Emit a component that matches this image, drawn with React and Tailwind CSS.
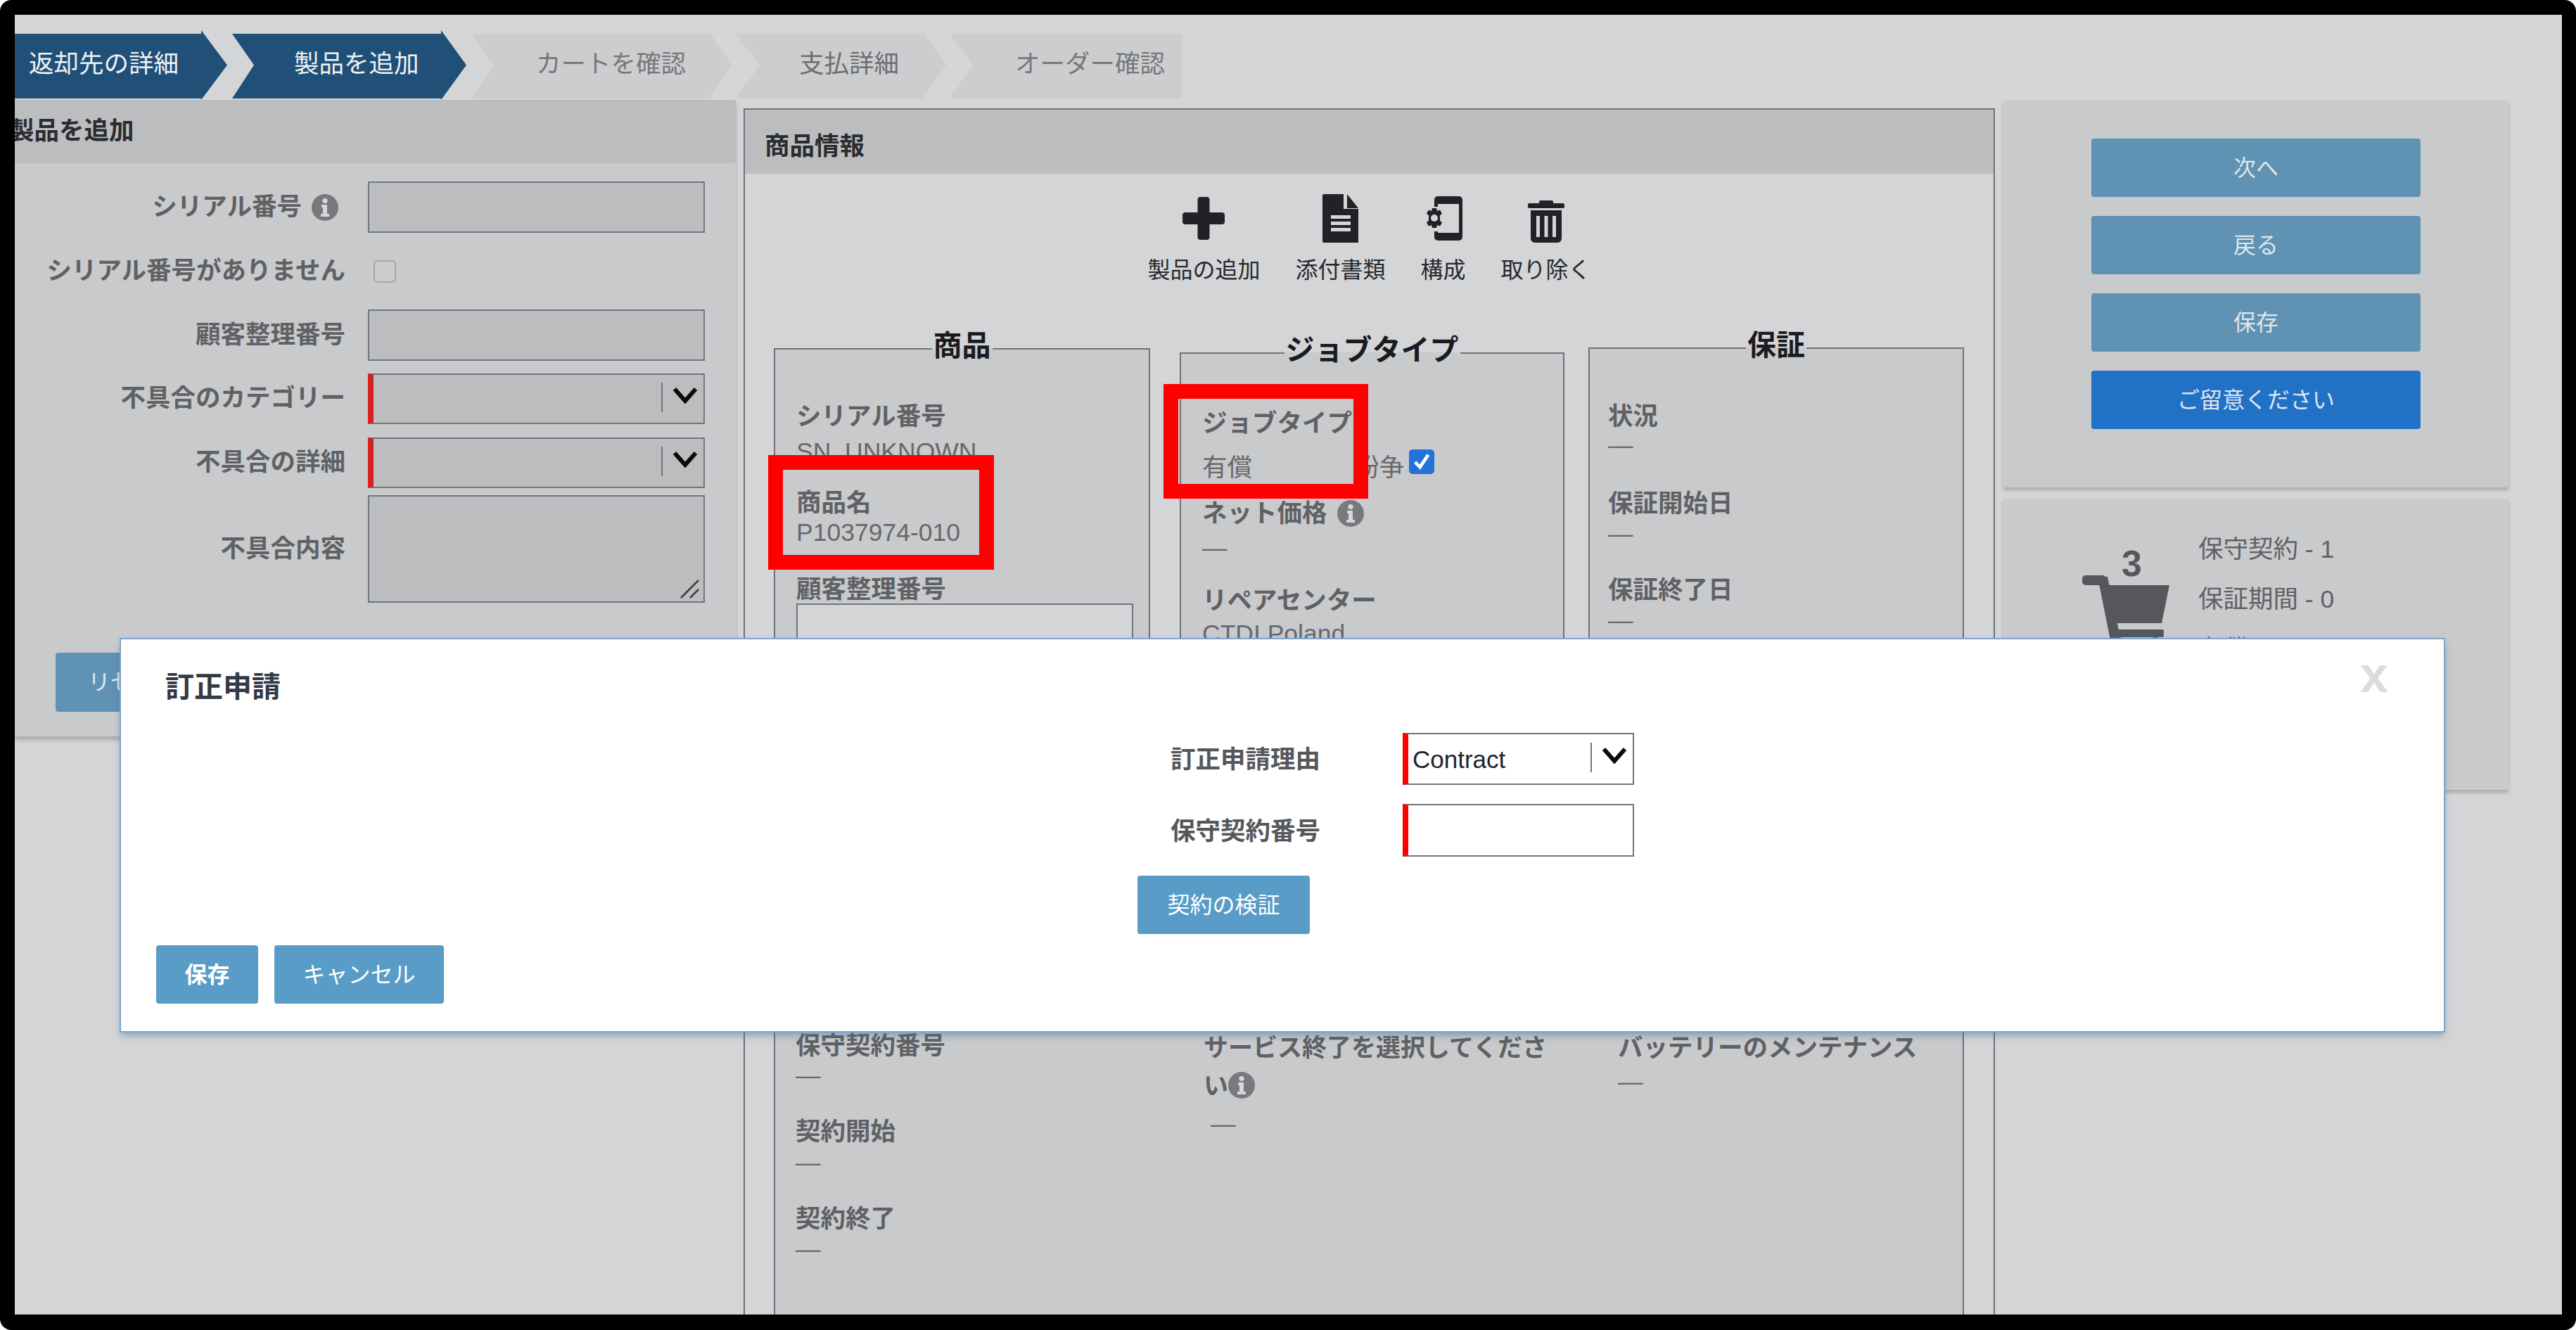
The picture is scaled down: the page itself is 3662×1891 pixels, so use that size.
import React from "react";

const FONT = "font-['Liberation_Sans','Noto_Sans_CJK_JP',sans-serif]";

function Chevron({ className }) {
  return (
    <svg viewBox="0 0 36 24" className={className} fill="none">
      <path d="M3 3 L18 20 L33 3" stroke="#0b0b0d" strokeWidth="6" />
    </svg>
  );
}

function Info({ className }) {
  return (
    <svg viewBox="0 0 38 38" className={className}>
      <circle cx="19" cy="19" r="19" fill="#77797c" />
      <circle cx="19" cy="9.5" r="3.6" fill="#d6d7d9" />
      <path d="M14 15h8v13h3v4H13v-4h3v-9h-2z" fill="#d6d7d9" />
    </svg>
  );
}

function SelectBox({ h, red, bg, children, w }) {
  return (
    <div className={`flex items-center border-2 border-[#70757e] border-l-[8px] ${red} ${bg} ${h} ${w} shrink-0`}>
      <div className="flex-1 pl-[6px] pt-[2px] text-[35px] leading-[40px] text-[#20242c]">{children}</div>
      <div className="w-[2px] h-[42px] bg-[#70757e] -mt-[4px]" />
      <Chevron className="w-[36px] h-[24px] ml-[14px] mr-[8px] -mt-[10px]" />
    </div>
  );
}

function Step({ className, children, text }) {
  return (
    <div className={`h-[99px] flex items-center text-[35.5px] leading-none shrink-0 ${className} ${text}`}>
      <span className="-mt-[1px]">{children}</span>
    </div>
  );
}

function FormRow({ label, children, className = "" }) {
  return (
    <div className={`flex items-center ${className}`}>
      <div className="w-[470px] text-right text-[35.5px] font-bold text-[#5f6165] leading-none flex justify-end items-center">{label}</div>
      <div className="ml-[32px]">{children}</div>
    </div>
  );
}

const inputCls = "block w-[479px] h-[73px] border-2 border-[#70757e] bg-[#bcbdbf] outline-none";

const L = ({ children, className = "" }) => (
  <div className={`text-[35.5px] leading-[40px] font-bold text-[#5f6165] whitespace-nowrap ${className}`}>{children}</div>
);
const V = ({ children, className = "" }) => (
  <div className={`text-[35.5px] leading-[40px] text-[#66686c] whitespace-nowrap ${className}`}>{children}</div>
);

function PanelButton({ children, blue }) {
  return (
    <button className={`block w-[468px] h-[83px] rounded-[4px] text-[32px] text-[#dfe6eb] ${blue ? "bg-[#2171c7]" : "bg-[#5f92b3]"}`}>
      {children}
    </button>
  );
}

function ModalButton({ children, className }) {
  return (
    <button className={`h-[83px] rounded-[4px] bg-[#589cc7] text-white text-[32px] shrink-0 ${className}`}>{children}</button>
  );
}

function Tool({ icon, label }) {
  return (
    <div className="flex flex-col items-center">
      <div className="h-[72px] flex items-center justify-center">{icon}</div>
      <div className="mt-[20px] text-[32px] leading-[36px] text-[#26282c] whitespace-nowrap">{label}</div>
    </div>
  );
}

const Legend = ({ children }) => (
  <legend className="mx-auto px-[2px] h-[40px] text-[41px] leading-[32px] font-bold text-[#1a1b1e]">{children}</legend>
);

export default function App() {
  return (
    <div className={`w-[3662px] h-[1891px] bg-white ${FONT}`}>
      <div className="w-full h-full bg-black rounded-[16px] pl-[21px] pt-[21px]">
        <div className="relative w-[3621px] h-[1848px] bg-[#d4d5d7] overflow-hidden">
          {/* stepper */}
          <div className="flex items-end h-[121px]">
            <Step
              text="text-[#eef2f5] pl-[20px]"
              className="w-[302px] bg-[#205078] [clip-path:polygon(0_5px,265px_5px,265px_0,100%_50%,265px_100%,265px_97px,0_97px)]"
            >
              返却先の詳細
            </Step>
            <Step
              text="text-[#eef2f5] pl-[88px]"
              className="ml-[7px] w-[333px] bg-[#205078] [clip-path:polygon(0_5px,297px_5px,297px_0,100%_50%,297px_100%,297px_97px,0_97px,31px_50%)]"
            >
              製品を追加
            </Step>
            <Step
              text="text-[#77787b] pl-[92px]"
              className="ml-[7px] w-[370px] bg-[#cccdcf] [clip-path:polygon(0_5px,337px_5px,337px_0,100%_50%,337px_100%,337px_97px,0_97px,32px_50%)]"
            >
              カートを確認
            </Step>
            <Step
              text="text-[#6d6e71] pl-[90px]"
              className="ml-[6px] w-[299px] bg-[#cccdcf] [clip-path:polygon(0_5px,264px_5px,264px_0,100%_50%,264px_100%,264px_97px,0_97px,34px_50%)]"
            >
              支払詳細
            </Step>
            <Step
              text="text-[#77787b] pl-[93px]"
              className="ml-[5px] w-[330px] bg-[#cccdcf] [clip-path:polygon(0_5px,100%_5px,100%_97px,0_97px,33px_50%)]"
            >
              オーダー確認
            </Step>
          </div>

          {/* main row */}
          <div className="flex items-start h-[1727px]">
            {/* left panel */}
            <section className="w-[1025px] shrink-0 bg-[#c9cacc] shadow-[0_5px_6px_rgba(0,0,0,0.2)] pb-[35px]">
              <div className="h-[90px] bg-[#bcbdbf] flex items-center">
                <h2 className="-ml-[8px] text-[35.5px] font-bold leading-none text-[#2a2c30]">製品を追加</h2>
              </div>
              <FormRow className="mt-[26px]" label={<><span>シリアル番号</span><Info className="w-[38px] h-[38px] ml-[14px] mr-[10px]" /></>}>
                <input readOnly className={inputCls} />
              </FormRow>
              <FormRow className="h-[109px]" label="シリアル番号がありません">
                <div className="w-[32px] h-[32px] ml-[8px] rounded-[6px] border-2 border-[#a6a7a9] bg-[#cbccce]" />
              </FormRow>
              <FormRow label="顧客整理番号">
                <input readOnly className={inputCls} />
              </FormRow>
              <FormRow className="mt-[18px]" label="不具合のカテゴリー">
                <SelectBox w="w-[479px]" h="h-[72px]" red="border-l-[#d8201f]" bg="bg-[#bcbdbf]" />
              </FormRow>
              <FormRow className="mt-[19px]" label="不具合の詳細">
                <SelectBox w="w-[479px]" h="h-[72px]" red="border-l-[#d8201f]" bg="bg-[#bcbdbf]" />
              </FormRow>
              <FormRow className="mt-[10px]" label="不具合内容">
                <div className="relative w-[479px] h-[153px] border-2 border-[#70757e] bg-[#bcbdbf]">
                  <svg viewBox="0 0 28 28" className="absolute right-[6px] bottom-[4px] w-[28px] h-[28px]" fill="none" stroke="#3c3e42" strokeWidth="2.5">
                    <path d="M2 27 L27 2" />
                    <path d="M15 27 L27 15" />
                  </svg>
                </div>
              </FormRow>
              <div className="mt-[71px] ml-[58px] w-[220px] h-[84px] rounded-[4px] bg-[#5f92b3] flex items-center justify-center text-[32px] text-[#dfe6eb]">
                リセット
              </div>
            </section>

            {/* middle panel */}
            <section className="ml-[11px] w-[1779px] shrink-0 self-stretch mt-[12px] border-t-2 border-x-2 border-[#6f7278] flex flex-col overflow-hidden">
              <div className="h-[91px] bg-[#bcbdbf] flex items-center pl-[28px] pt-[14px] shrink-0">
                <h2 className="text-[35.5px] font-bold leading-none text-[#2a2c30]">商品情報</h2>
              </div>
              <div className="flex justify-center gap-[50px] mt-[27px] shrink-0">
                <Tool
                  label="製品の追加"
                  icon={
                    <svg viewBox="0 0 60 61" className="w-[60px] h-[61px]" fill="#212226">
                      <rect x="21.5" y="0" width="17" height="61" rx="4" />
                      <rect x="0" y="22" width="60" height="17" rx="4" />
                    </svg>
                  }
                />
                <Tool
                  label="添付書類"
                  icon={
                    <svg viewBox="0 0 51 69" className="w-[51px] h-[69px]">
                      <path d="M2 0H30V21H51V69H2a2 2 0 0 1-2-2V2a2 2 0 0 1 2-2Z" fill="#212226" />
                      <path d="M35 0L51 20H35Z" fill="#212226" />
                      <rect x="12" y="30" width="28" height="5" fill="#d4d5d7" />
                      <rect x="12" y="39" width="28" height="5" fill="#d4d5d7" />
                      <rect x="12" y="48" width="28" height="5" fill="#d4d5d7" />
                    </svg>
                  }
                />
                <Tool
                  label="構成"
                  icon={
                    <svg viewBox="0 0 54 63" className="w-[54px] h-[63px]">
                      <path d="M14 15V5a5 5 0 0 1 5-5h30a5 5 0 0 1 5 5v53a5 5 0 0 1-5 5H19a5 5 0 0 1-5-5V50h5v2h30V11H19v4Z" fill="#212226" />
                      <g transform="translate(14 31)" fill="#212226">
                        <path d="M-3-14h6l1 4 4-1.500 3 5-3 3v7l3 3-3 5-4-1.500-1 4h-6l-1-4-4 1.500-3-5 3-3v-7l-3-3 3-5 4 1.500Z" />
                        <circle r="5" fill="#d4d5d7" />
                      </g>
                    </svg>
                  }
                />
                <Tool
                  label="取り除く"
                  icon={
                    <svg viewBox="0 0 52 60" className="w-[52px] h-[60px] mt-[10px]">
                      <rect x="16" y="0" width="20" height="6" rx="2" fill="#212226" />
                      <rect x="0" y="4" width="52" height="7" rx="2" fill="#212226" />
                      <path d="M4 14H48V54a6 6 0 0 1-6 6H10a6 6 0 0 1-6-6Z" fill="#212226" />
                      <rect x="12" y="22" width="5" height="30" fill="#d4d5d7" />
                      <rect x="23.500" y="22" width="5" height="30" fill="#d4d5d7" />
                      <rect x="35" y="22" width="5" height="30" fill="#d4d5d7" />
                    </svg>
                  }
                />
              </div>

              {/* first row of fieldsets */}
              <div className="flex items-start ml-[41px] mt-[73px] h-[865px] shrink-0">
                <fieldset className="mt-[1px] w-[535px] h-[700px] min-w-0 border-2 border-[#6f7278] bg-[#c9cacc] shrink-0">
                  <Legend>商品</Legend>
                  <div className="pl-[30px]">
                    <L className="mt-[56px]">シリアル番号</L>
                    <V className="mt-[10px]">SN_UNKNOWN</V>
                    <L className="mt-[33px]">商品名</L>
                    <V className="mt-[2px]">P1037974-010</V>
                    <L className="mt-[41px]">顧客整理番号</L>
                    <div className="mt-[0px] w-[479px] h-[70px] border-2 border-[#70757e] bg-[#d4d5d7]" />
                  </div>
                </fieldset>
                <fieldset className="ml-[42px] mt-[7px] w-[547px] h-[700px] min-w-0 border-2 border-[#6f7278] bg-[#c9cacc] shrink-0">
                  <Legend>ジョブタイプ</Legend>
                  <div className="pl-[30px]">
                    <L className="mt-[60px]">ジョブタイプ</L>
                    <div className="mt-[23px] flex items-center w-[330px]">
                      <V className="flex-1">有償</V>
                      <V>紛争</V>
                      <div className="ml-[7px] -mt-[18px] w-[36px] h-[35px] rounded-[5px] bg-[#2272d8] flex items-center justify-center">
                        <svg viewBox="0 0 24 24" className="w-[28px] h-[28px]" fill="none" stroke="#fff" strokeWidth="4">
                          <path d="M4 13 L10 19 L20 4" />
                        </svg>
                      </div>
                    </div>
                    <L className="mt-[25px] flex items-center">
                      ネット価格
                      <Info className="w-[38px] h-[38px] ml-[14px]" />
                    </L>
                    <V className="mt-[9px]">—</V>
                    <L className="mt-[35px]">リペアセンター</L>
                    <V className="mt-[7px]">CTDI Poland</V>
                  </div>
                </fieldset>
                <fieldset className="ml-[34px] w-[534px] h-[700px] min-w-0 border-2 border-[#6f7278] bg-[#c9cacc] shrink-0">
                  <Legend>保証</Legend>
                  <div className="pl-[26px]">
                    <L className="mt-[57px]">状況</L>
                    <V className="mt-[1px]">—</V>
                    <L className="mt-[43px]">保証開始日</L>
                    <V className="mt-[3px]">—</V>
                    <L className="mt-[40px]">保証終了日</L>
                    <V className="mt-[3px]">—</V>
                  </div>
                </fieldset>
              </div>

              {/* lower fieldset */}
              <div className="ml-[41px] w-[1692px] flex-1 border-t-2 border-x-2 border-[#6f7278] bg-[#c9cacc] flex pt-[121px]">
                <div className="w-[609px] pl-[29px] shrink-0">
                  <L className="mt-[4px]">保守契約番号</L>
                  <V className="mt-[2px]">—</V>
                  <L className="mt-[40px]">契約開始</L>
                  <V className="mt-[4px]">—</V>
                  <L className="mt-[40px]">契約終了</L>
                  <V className="mt-[3px]">—</V>
                </div>
                <div className="w-[589px] shrink-0">
                  <div className="w-[510px] text-[35px] leading-[54px] font-bold text-[#5f6165]">
                    サービス終了を選択してください
                    <Info className="inline-block align-[-6px] w-[38px] h-[38px]" />
                  </div>
                  <V className="mt-[7px] ml-[10px]">—</V>
                </div>
                <div className="flex-1 pt-[7px]">
                  <L>バッテリーのメンテナンス</L>
                  <V className="mt-[8px]">—</V>
                </div>
              </div>
            </section>

            {/* right column */}
            <aside className="ml-[12px] w-[718px] shrink-0 mt-[1px]">
              <div className="h-[550px] bg-[#c9cacc] shadow-[0_4px_5px_rgba(0,0,0,0.2)] pt-[54px] flex flex-col items-center gap-[27px]">
                <PanelButton>次へ</PanelButton>
                <PanelButton>戻る</PanelButton>
                <PanelButton>保存</PanelButton>
                <PanelButton blue>ご留意ください</PanelButton>
              </div>
              <div className="mt-[16px] h-[414px] bg-[#c9cacc] shadow-[0_4px_5px_rgba(0,0,0,0.2)] flex">
                <div className="ml-[112px] w-[124px] pt-[71px] shrink-0">
                  <div className="ml-[56px] text-[52px] leading-[42px] font-bold text-[#55575a]">3</div>
                  <svg viewBox="0 0 124 100" className="w-[124px] h-[100px] mt-[-4px]" fill="#55575a">
                    <rect x="0" y="0" width="34" height="14" rx="5" />
                    <path d="M22 2L36 2L55 92L40 92Z" />
                    <path d="M34 14H124L113 68H46Z" />
                    <rect x="44" y="77" width="72" height="11" rx="2" />
                    <circle cx="52" cy="96" r="8" />
                    <circle cx="104" cy="96" r="8" />
                  </svg>
                </div>
                <div className="ml-[41px] pt-[52px] flex flex-col gap-[31px] text-[35.5px] leading-[40px] text-[#5f6165]">
                  <div>保守契約 - 1</div>
                  <div>保証期間 - 0</div>
                  <div>有償 - 2</div>
                </div>
              </div>
            </aside>
          </div>

          {/* red annotation boxes */}
          <div className="absolute left-[1071px] top-[626px] w-[321px] h-[163px] border-[21px] border-[#ff0000]" />
          <div className="absolute left-[1633px] top-[525px] w-[291px] h-[163px] border-[21px] border-[#ff0000]" />

          {/* modal */}
          <div className="absolute left-[151px] top-[888px] w-[3302px] h-[557px] bg-white shadow-[0_0_0_2px_#7ba7cc,0_6px_10px_rgba(60,110,160,0.5)]">
            <div className="flex justify-between items-start pl-[63px] pr-[79px] pt-[43px] h-[133px]">
              <h3 className="text-[41px] leading-[50px] font-bold text-[#333a45]">訂正申請</h3>
              <div className="text-[72px] leading-[50px] font-bold text-[#dcdcdc] -mt-[18px]">x</div>
            </div>
            <div className="flex items-center pl-[1492px] h-[74px]">
              <div className="w-[330px] pt-[4px] text-[35.5px] font-bold text-[#55575b] leading-none">訂正申請理由</div>
              <SelectBox w="w-[329px]" h="h-[74px]" red="border-l-[#ff0000]" bg="bg-white">Contract</SelectBox>
            </div>
            <div className="flex items-center pl-[1492px] h-[75px] mt-[27px]">
              <div className="w-[330px] pt-[4px] text-[35.5px] font-bold text-[#55575b] leading-none">保守契約番号</div>
              <div className="w-[329px] h-[75px] border-2 border-[#70757e] border-l-[8px] border-l-[#ff0000] bg-white" />
            </div>
            <div className="mt-[27px] ml-[1445px]">
              <ModalButton className="w-[245px]">契約の検証</ModalButton>
            </div>
            <div className="mt-[16px] ml-[50px] flex gap-[23px]">
              <ModalButton className="w-[145px] font-bold">保存</ModalButton>
              <ModalButton className="w-[241px]">キャンセル</ModalButton>
            </div>
          </div>
        </div>
      </div>
    </div>
  );
}
